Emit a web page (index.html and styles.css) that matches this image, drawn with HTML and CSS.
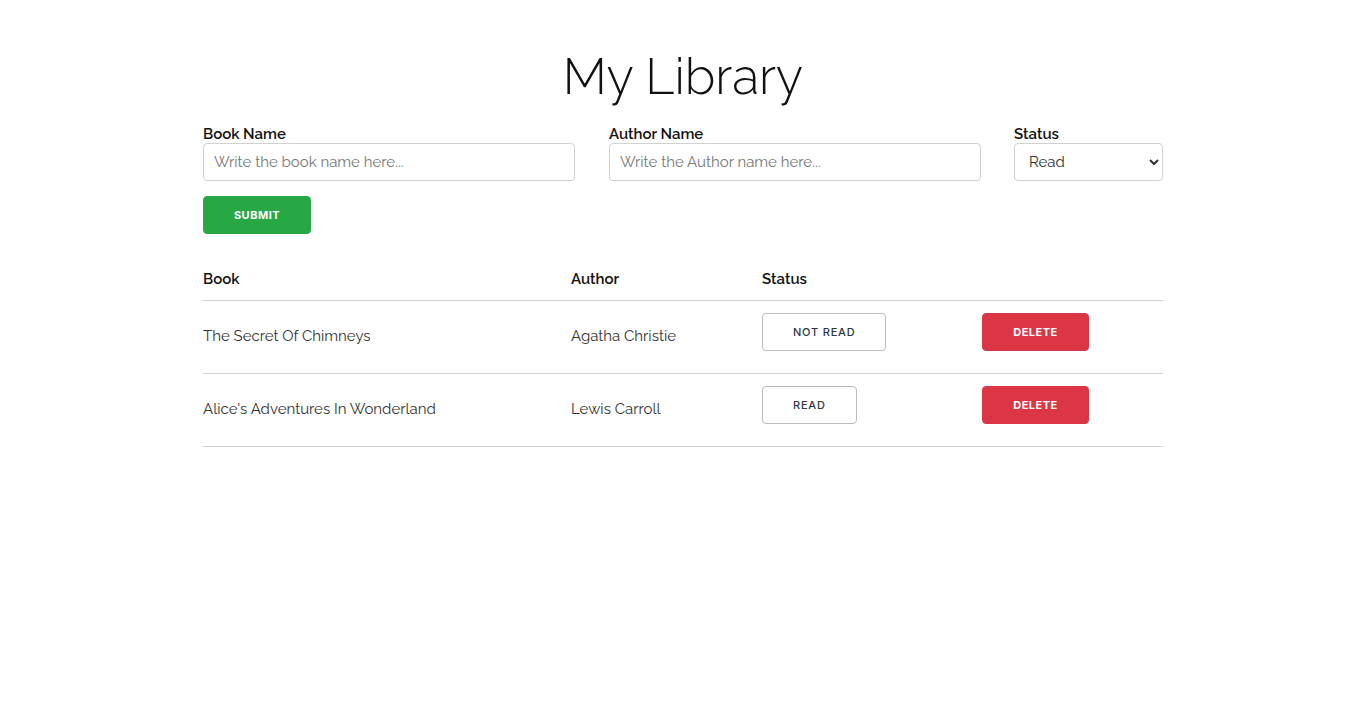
FILE: index.html
```html
<!DOCTYPE html>
<html>
<head>
<meta charset="utf-8">
<title>My Library</title>
<link rel="stylesheet" href="styles.css">
</head>
<body>
<div class="container">
  <h1 class="title">My Library</h1>
  <form class="book-form">
    <div class="fields">
      <div class="field field-book">
        <label class="label" for="book">Book Name</label>
        <input class="input" id="book" type="text" placeholder="Write the book name here...">
      </div>
      <div class="field field-author">
        <label class="label" for="author">Author Name</label>
        <input class="input" id="author" type="text" placeholder="Write the Author name here...">
      </div>
      <div class="field field-status">
        <label class="label" for="status">Status</label>
        <select class="select" id="status">
          <option>Read</option>
          <option>Not Read</option>
        </select>
      </div>
    </div>
    <button type="button" class="btn btn-submit">Submit</button>
  </form>
  <table class="books">
    <colgroup>
      <col class="c1"><col class="c2"><col class="c3"><col class="c4">
    </colgroup>
    <thead>
      <tr><th>Book</th><th>Author</th><th>Status</th><th></th></tr>
    </thead>
    <tbody>
      <tr>
        <td>The Secret Of Chimneys</td>
        <td>Agatha Christie</td>
        <td><button type="button" class="btn btn-outline">Not Read</button></td>
        <td><button type="button" class="btn btn-delete">Delete</button></td>
      </tr>
      <tr>
        <td>Alice's Adventures In Wonderland</td>
        <td>Lewis Carroll</td>
        <td><button type="button" class="btn btn-outline">Read</button></td>
        <td><button type="button" class="btn btn-delete">Delete</button></td>
      </tr>
    </tbody>
  </table>
</div>
</body>
</html>
```
FILE: styles.css
```css
* { box-sizing: border-box; }
html, body { margin: 0; padding: 0; background: #fff; }
body {
  font-family: Raleway, Lato, "Open Sans", sans-serif;
  font-size: 15px;
  line-height: 1.6;
  color: #222;
}
.container {
  width: 960px;
  margin: 0 auto;
}
.title {
  margin: 47px 0 18px;
  font-size: 50px;
  font-weight: 300;
  line-height: 60px;
  text-align: center;
  color: #111;
}
.fields {
  display: flex;
  gap: 34px;
}
.field { display: flex; flex-direction: column; }
.field-book, .field-author { width: 372px; }
.field-status { width: 149px; margin-left: -1px; }
.label {
  display: block;
  font-weight: 600;
  line-height: 18px;
  color: #111;
}
.input, .select {
  height: 38px;
  padding: 6px 10px;
  border: 1px solid #d1d1d1;
  border-radius: 4px;
  font-family: inherit;
  font-size: 15px;
  color: #333;
  background: #fff;
  margin-bottom: 15px;
  width: 100%;
}
.input::placeholder { color: #777; }
.select { padding-left: 10px; }
.btn {
  display: inline-block;
  height: 38px;
  padding: 0 30px;
  border-radius: 4px;
  font-family: Inter, "Liberation Sans", sans-serif;
  font-size: 11px;
  font-weight: 500;
  letter-spacing: 0.8px;
  text-transform: uppercase;
  line-height: 35px;
  cursor: pointer;
  white-space: nowrap;
}
.btn-submit {
  background: #28a745;
  border: 1px solid #28a745;
  color: #fff;
  width: 108px;
  padding: 0;
  font-weight: 700;
  letter-spacing: 0.5px;
  margin-bottom: 18px;
}
.btn-outline {
  background: #fff;
  border: 1px solid #bbb;
  color: #2f3640;
}
.btn-delete {
  background: #dc3545;
  border: 1px solid #dc3545;
  color: #fff;
  width: 107px;
  padding: 0;
  font-weight: 700;
  letter-spacing: 0.5px;
}
.books {
  width: 960px;
  border-collapse: collapse;
  table-layout: fixed;
}
.c1 { width: 353px; }
.c2 { width: 191px; }
.c3 { width: 220px; }
.c4 { width: 196px; }
.books th, .books td {
  text-align: left;
  padding: 12px 15px;
  border-bottom: 1px solid #d1d1d1;
}
.books th { padding-top: 15px; padding-bottom: 9px; font-weight: 600; color: #111; }
.books th:first-child, .books td:first-child { padding-left: 0; }
.books th:last-child, .books td:last-child { padding-right: 0; }
.books td { color: #333; vertical-align: middle; }
.books td .btn { margin-bottom: 10px; vertical-align: top; }
.books td:nth-child(1), .books td:nth-child(2) { padding-top: 16px; padding-bottom: 18px; }
```
